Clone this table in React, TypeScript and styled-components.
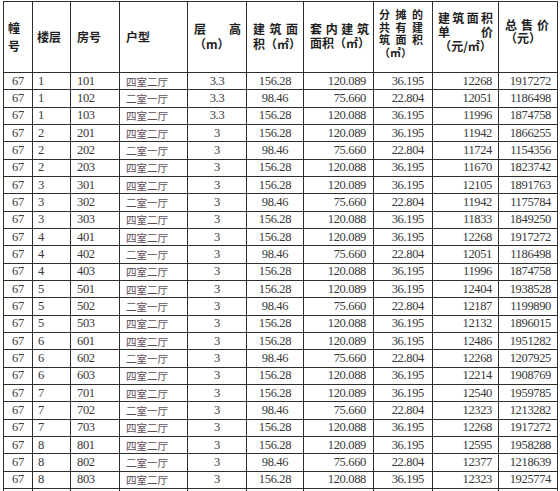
import React from "react";
import styled, { createGlobalStyle } from "styled-components";

const GlobalStyle = createGlobalStyle`
  html, body {
    margin: 0;
    padding: 0;
    background: #ffffff;
  }
  body {
    padding: 1px 0 0 3px;
    overflow: hidden;
  }
`;

const COLS = [29, 38, 49, 68, 59, 57, 70, 59, 66, 59];

const Sheet = styled.div`
  display: grid;
  grid-template-columns: ${COLS.map((c) => `${c}px`).join(" ")};
  grid-template-rows: 71px repeat(25, 17.33px);
  width: max-content;
  border-top: 1px solid #2e2e2e;
  border-left: 1px solid #2e2e2e;
`;

type Align = "left" | "center" | "right";

const HeadCell = styled.div<{
  $padL?: number;
  $padR?: number;
  $lh?: number;
  $shift?: number;
  $size?: number;
}>`
  box-sizing: border-box;
  display: flex;
  flex-direction: column;
  justify-content: center;
  padding: 0 ${(p) => p.$padR ?? 5}px ${(p) => p.$shift ?? 0}px ${(p) => p.$padL ?? 5}px;
  border-right: 1px solid #2e2e2e;
  border-bottom: 1px solid #2e2e2e;
  font-family: "Noto Sans CJK SC", "Liberation Serif", sans-serif;
  font-weight: 700;
  font-size: ${(p) => p.$size ?? 12}px;
  line-height: ${(p) => p.$lh ?? 14}px;
  color: #1e1e1e;
  white-space: nowrap;
`;

const HeadLine = styled.span<{ $spread?: boolean; $center?: boolean }>`
  display: block;
  text-align: ${(p) => (p.$center ? "center" : "justify")};
  text-align-last: ${(p) => (p.$spread ? "justify" : p.$center ? "center" : "left")};
`;

const Cell = styled.div<{ $align: Align; $pad: number; $cjk?: boolean }>`
  box-sizing: border-box;
  display: flex;
  align-items: center;
  justify-content: ${(p) =>
    p.$align === "left" ? "flex-start" : p.$align === "right" ? "flex-end" : "center"};
  padding: ${(p) =>
    p.$align === "left" ? `0 0 0 ${p.$pad}px` : p.$align === "right" ? `0 ${p.$pad}px 0 0` : "0"};
  border-right: 1px solid #2e2e2e;
  border-bottom: 1px solid #2e2e2e;
  font-family: ${(p) =>
    p.$cjk ? `"Noto Sans CJK SC", sans-serif` : `"Liberation Serif", serif`};
  font-size: ${(p) => (p.$cjk ? "10.5px" : "12.5px")};
  letter-spacing: ${(p) => (p.$cjk ? "0" : "-0.35px")};
  color: ${(p) => (p.$cjk ? "#5e4855" : "#383838")};
  white-space: nowrap;
  overflow: hidden;
`;

type Head = {
  lines: { text: string; spread?: boolean; center?: boolean }[];
  padL?: number;
  padR?: number;
  lh?: number;
  shift?: number;
  size?: number;
};

const HEADS: Head[] = [
  { lines: [{ text: "幢" }, { text: "号" }], padL: 4, lh: 18 },
  { lines: [{ text: "楼层" }], padL: 4 },
  { lines: [{ text: "房号" }], padL: 6 },
  { lines: [{ text: "户型" }], padL: 6 },
  { lines: [{ text: "层高", spread: true }, { text: "（m）" }], padL: 6, padR: 5, lh: 15, shift: 2 },
  { lines: [{ text: "建筑面", spread: true }, { text: "积（㎡）" }], padL: 6, padR: 5, lh: 15, shift: 2 },
  { lines: [{ text: "套内建筑", spread: true }, { text: "面积（㎡）" }], padL: 6, padR: 4, lh: 14, shift: 2 },
  {
    lines: [
      { text: "分摊的", spread: true },
      { text: "共有建", spread: true },
      { text: "筑面积", spread: true },
      { text: "（㎡）" },
    ],
    padL: 5,
    padR: 9,
    lh: 12.5,
    shift: 8,
    size: 11,
  },
  {
    lines: [
      { text: "建筑面积", spread: true },
      { text: "单价", spread: true },
      { text: "（元/㎡）", center: true },
    ],
    padL: 5,
    padR: 5,
    lh: 14,
    shift: 10,
  },
  { lines: [{ text: "总售价", spread: true }, { text: "（元）" }], padL: 6, padR: 8, lh: 13, shift: 12 },
];

const ALIGN: { align: Align; pad: number; cjk?: boolean }[] = [
  { align: "center", pad: 0 },
  { align: "left", pad: 5 },
  { align: "left", pad: 6 },
  { align: "left", pad: 6, cjk: true },
  { align: "center", pad: 0 },
  { align: "center", pad: 0 },
  { align: "right", pad: 7 },
  { align: "right", pad: 8 },
  { align: "right", pad: 6 },
  { align: "right", pad: 6 },
];

const BIG = ["四室二厅", "156.28"];
const SMALL = ["二室一厅", "98.46", "75.660", "22.804"];

const prices: [string, string][] = [
  ["12268", "1917272"],
  ["12051", "1186498"],
  ["11996", "1874758"],
  ["11942", "1866255"],
  ["11724", "1154356"],
  ["11670", "1823742"],
  ["12105", "1891763"],
  ["11942", "1175784"],
  ["11833", "1849250"],
  ["12268", "1917272"],
  ["12051", "1186498"],
  ["11996", "1874758"],
  ["12404", "1938528"],
  ["12187", "1199890"],
  ["12132", "1896015"],
  ["12486", "1951282"],
  ["12268", "1207925"],
  ["12214", "1908769"],
  ["12540", "1959785"],
  ["12323", "1213282"],
  ["12268", "1917272"],
  ["12595", "1958288"],
  ["12377", "1218639"],
  ["12323", "1925774"],
];

const rows: string[][] = prices.map(([unit, total], i) => {
  const floor = Math.floor(i / 3) + 1;
  const n = (i % 3) + 1;
  const height = floor === 1 ? "3.3" : "3";
  if (n === 2) {
    return ["67", `${floor}`, `${floor}0${n}`, SMALL[0], height, SMALL[1], SMALL[2], SMALL[3], unit, total];
  }
  const inner = n === 1 ? "120.089" : "120.088";
  return ["67", `${floor}`, `${floor}0${n}`, BIG[0], height, BIG[1], inner, "36.195", unit, total];
});

export default function App() {
  return (
    <>
      <GlobalStyle />
      <Sheet>
        {HEADS.map((h, i) => (
          <HeadCell
            key={`h${i}`}
            $padL={h.padL}
            $padR={h.padR}
            $lh={h.lh}
            $shift={h.shift}
            $size={h.size}
          >
            {h.lines.map((l, j) => (
              <HeadLine key={j} $spread={l.spread} $center={l.center}>
                {l.text}
              </HeadLine>
            ))}
          </HeadCell>
        ))}
        {rows.map((r, i) =>
          r.map((v, j) => (
            <Cell key={`${i}-${j}`} $align={ALIGN[j].align} $pad={ALIGN[j].pad} $cjk={ALIGN[j].cjk}>
              {v}
            </Cell>
          ))
        )}
        {ALIGN.map((a, j) => (
          <Cell key={`tail-${j}`} $align={a.align} $pad={a.pad} $cjk={a.cjk} />
        ))}
      </Sheet>
    </>
  );
}
